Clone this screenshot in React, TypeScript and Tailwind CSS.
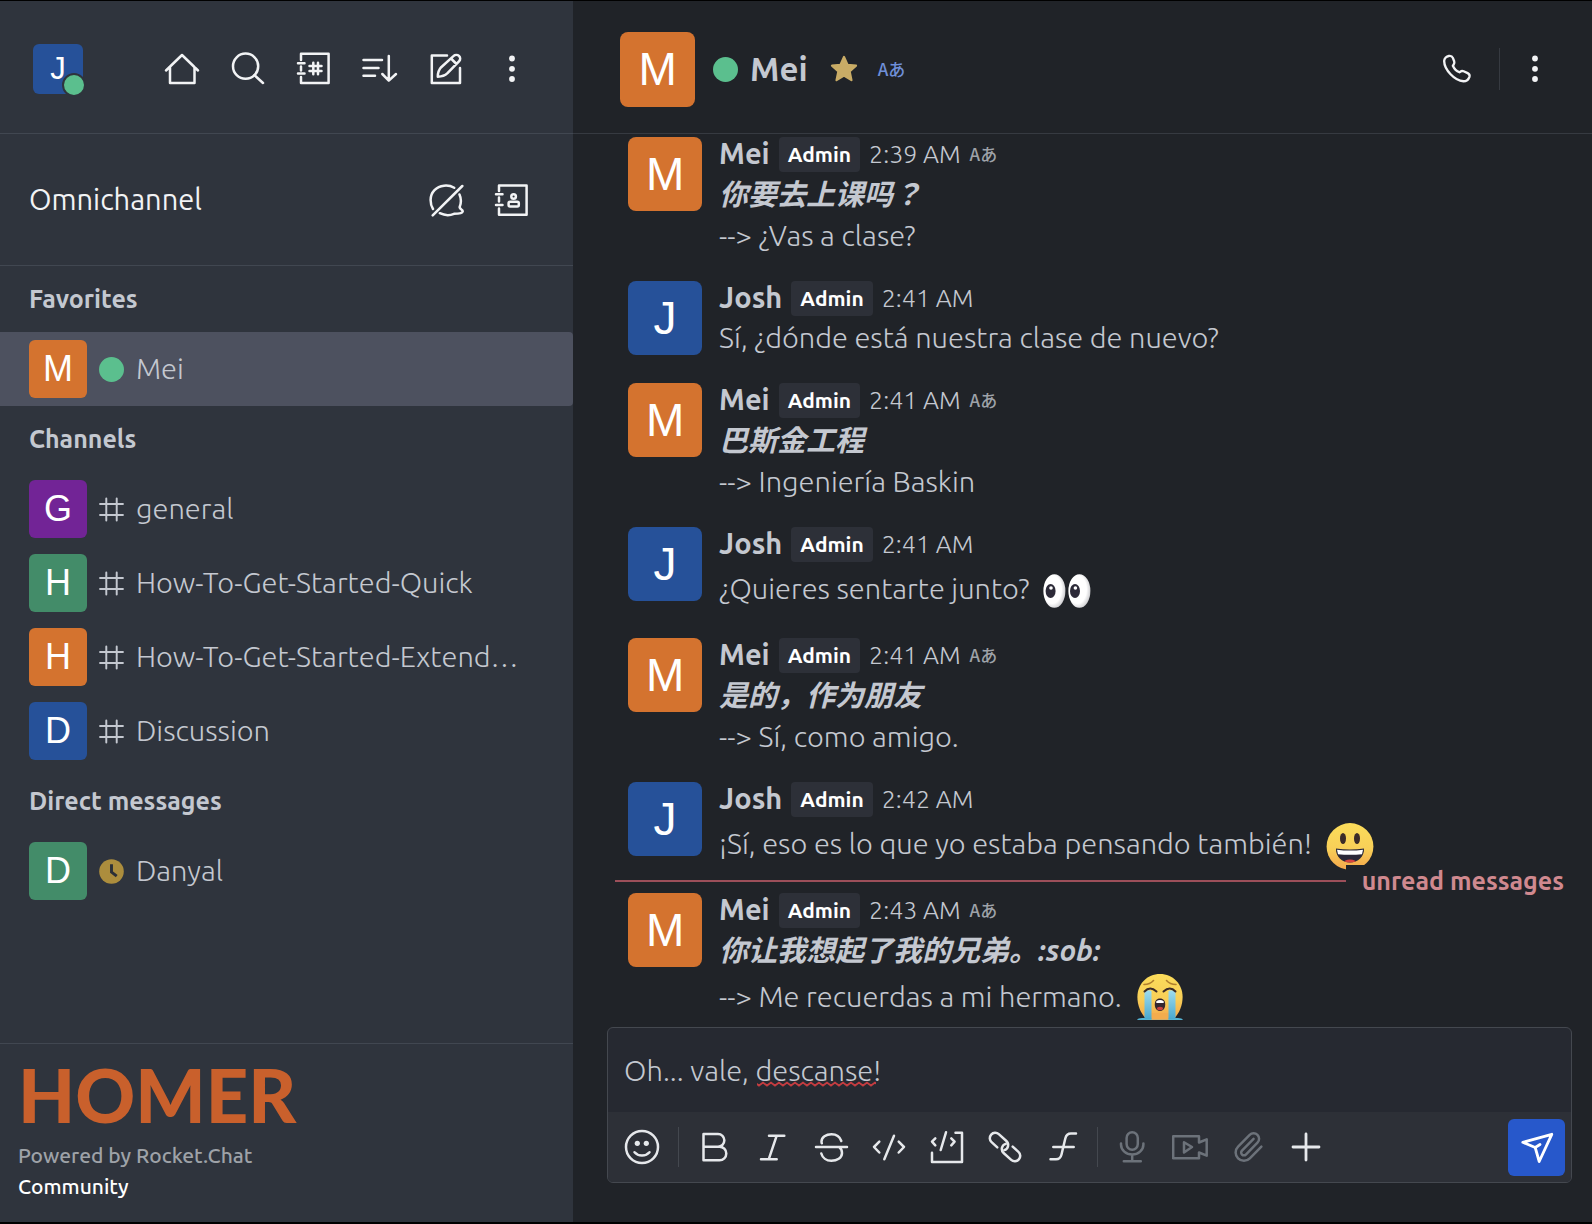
import React from "react";

type IconProps = { children: React.ReactNode; className?: string };

const Icon = ({ children, className = "size-9" }: IconProps) => (
  <svg
    viewBox="0 0 36 36"
    className={className}
    fill="none"
    stroke="currentColor"
    strokeWidth="2.5"
    strokeLinecap="round"
    strokeLinejoin="round"
    aria-hidden="true"
  >
    {children}
  </svg>
);

const Kebab = () => (
  <Icon>
    <g fill="currentColor" stroke="none">
      <circle cx="18" cy="7.5" r="2.9" />
      <circle cx="18" cy="17.8" r="2.9" />
      <circle cx="18" cy="28" r="2.9" />
    </g>
  </Icon>
);

const navIcons = [
  {
    label: "Home",
    icon: <Icon><path d="M2 19.5L18 4L34 19.5M6 16V32H30.5V16" /></Icon>,
  },
  {
    label: "Search",
    icon: <Icon><circle cx="15.6" cy="15.2" r="12.6" /><path d="M24.5 24.2L33 32" /></Icon>,
  },
  {
    label: "Directory",
    icon: (
      <Icon>
        <path d="M5 9V2.8H32.6V32H5V26M5 15.5V19.5M2 12.3H8.5M2 22.4H8.5" />
        <path d="M17.3 11.7V23.2M22 11.7V23.2M13.5 15H25.5M13.5 20H25.5" />
      </Icon>
    ),
  },
  {
    label: "Sort",
    icon: <Icon><path d="M1.5 9H20M1.5 17H16.5M1.5 24.7H13M26.8 5V29.5M20.3 23L26.8 29.6L34 23" /></Icon>,
  },
  {
    label: "Create new",
    icon: (
      <Icon>
        <path d="M19 4.6H3.8V32H32V17" />
        <path d="M9.8 25.7C9.8 21.8 11 18.6 13.2 16.2L25.7 4.9C27 3.6 29.5 3.5 31 4.9C32.5 6.3 32.5 8.7 31.2 10.1L19.5 22.2C17 24.6 13.8 25.7 9.8 25.7ZM23 7.5L28.5 13" />
      </Icon>
    ),
  },
  { label: "Options", icon: <Kebab /> },
];

const Hash = () => (
  <Icon className="size-[25px] shrink-0">
    <path strokeWidth="2.8" d="M10.5 2V34M25.5 2V34M1.5 10H34.5M1.5 26H34.5" />
  </Icon>
);

const Away = () => (
  <svg viewBox="0 0 24 24" className="size-[25px] shrink-0" role="img" aria-label="Away">
    <circle cx="12" cy="12" r="11.8" fill="#ac8d3d" />
    <path d="M12 5V12.5L17 16.5" fill="none" stroke="#2b2f37" strokeWidth="2.8" />
  </svg>
);

const Online = () => <span role="img" aria-label="Online" className="size-[25px] shrink-0 rounded-full bg-[#5bbf8e]" />;

const EyesEmoji = () => (
  <svg viewBox="0 0 48 48" className="mt-1 ml-[14px] size-12" role="img" aria-label="eyes">
    <defs>
      <radialGradient id="eye" cx="0.4" cy="0.45" r="0.6">
        <stop offset="0.7" stopColor="#ffffff" />
        <stop offset="1" stopColor="#cfcfd2" />
      </radialGradient>
    </defs>
    <ellipse cx="11.4" cy="24" rx="11" ry="16.8" fill="url(#eye)" />
    <ellipse cx="36.4" cy="24" rx="11" ry="16.8" fill="url(#eye)" />
    <ellipse cx="7.6" cy="24" rx="5" ry="7" fill="#2c2a38" />
    <ellipse cx="32" cy="24" rx="5" ry="7" fill="#2c2a38" />
    <circle cx="8" cy="21" r="1.8" fill="#fff" />
    <circle cx="32.4" cy="21" r="1.8" fill="#fff" />
  </svg>
);

const SmileyEmoji = () => (
  <svg viewBox="0 0 48 48" className="mt-1 ml-[14px] size-12" role="img" aria-label="smiley">
    <defs>
      <linearGradient id="face" x1="0" y1="0" x2="0" y2="1">
        <stop offset="0" stopColor="#fbdc5a" />
        <stop offset="0.55" stopColor="#f8cf58" />
        <stop offset="1" stopColor="#f3a64b" />
      </linearGradient>
      <clipPath id="grin">
        <path d="M10 26.5Q24 28.5 38 26.5C38.5 34.5 32 40.5 24 40.5C16 40.5 9.5 34.5 10 26.5Z" />
      </clipPath>
    </defs>
    <circle cx="24" cy="24.5" r="23.4" fill="url(#face)" />
    <ellipse cx="17" cy="16.5" rx="3" ry="5.6" fill="#3b2b28" />
    <ellipse cx="31" cy="16.5" rx="3" ry="5.6" fill="#3b2b28" />
    <g clipPath="url(#grin)">
      <rect x="8" y="25" width="32" height="18" fill="#2a2838" />
      <ellipse cx="24" cy="41" rx="6.5" ry="3.6" fill="#d8443f" />
      <path d="M11 27.7Q24 29.5 37 27.7L36 32.2Q24 33.5 12 32.2Z" fill="#fff" />
    </g>
  </svg>
);

const SobEmoji = () => (
  <svg viewBox="0 0 48 48" className="ml-[14px] size-12" role="img" aria-label="sob">
    <defs>
      <linearGradient id="tear" x1="0" y1="0" x2="0" y2="1">
        <stop offset="0" stopColor="#9fdcef" />
        <stop offset="1" stopColor="#4aa9cf" />
      </linearGradient>
    </defs>
    <path d="M24 1C37 1 46.6 11 46.6 24C46.6 33 43 41 37 46.5H11C5 41 1.4 33 1.4 24C1.4 11 11 1 24 1Z" fill="url(#face)" />
    <path d="M1 47Q2 44.5 8 45H40Q46 44.5 47 47Z" fill="#54b3d3" />
    <path d="M15.5 46.8V40H32.5V46.8Z" fill="#f3ac4d" />
    <path d="M8.5 18Q12 16.5 15.5 18V46H8.5ZM32.5 18Q36 16.5 39.5 18V46H32.5Z" fill="url(#tear)" />
    <g fill="none" strokeLinecap="round">
      <path d="M8 11.5Q14 11.5 17.5 7.5M40 11.5Q34 11.5 30.5 7.5" stroke="#b17f2c" strokeWidth="1.6" />
      <path d="M8.5 18.5Q14 12.5 20.5 18.5M27.5 18.5Q34 12.5 39.5 18.5" stroke="#3b2b28" strokeWidth="2" />
    </g>
    <path d="M24 25.5C27.5 25.5 29.2 28 29.2 31.5C29.2 35.5 27 38 24 38C21 38 18.8 35.5 18.8 31.5C18.8 28 20.5 25.5 24 25.5Z" fill="#33262f" />
    <path d="M20.3 28.3Q24 25.8 27.7 28.3V30H20.3Z" fill="#fff" />
    <ellipse cx="24" cy="35.5" rx="3" ry="1.8" fill="#c8423f" />
  </svg>
);

const rooms = [
  {
    title: "Favorites",
    items: [{ letter: "M", color: "bg-[#d4732f]", status: <Online />, name: "Mei", selected: true }],
  },
  {
    title: "Channels",
    items: [
      { letter: "G", color: "bg-[#722496]", status: <Hash />, name: "general" },
      { letter: "H", color: "bg-[#438c69]", status: <Hash />, name: "How-To-Get-Started-Quick" },
      { letter: "H", color: "bg-[#d4732f]", status: <Hash />, name: "How-To-Get-Started-Extend…" },
      { letter: "D", color: "bg-[#265199]", status: <Hash />, name: "Discussion" },
    ],
  },
  {
    title: "Direct messages",
    items: [{ letter: "D", color: "bg-[#438c69]", status: <Away />, name: "Danyal" }],
  },
];

type ChatMessage = {
  user: "Mei" | "Josh";
  time: string;
  original?: string;
  text: string;
  emoji?: React.ReactNode;
  unread?: boolean;
};

const messages: ChatMessage[] = [
  { user: "Mei", time: "2:39 AM", original: "你要去上课吗？", text: "--> ¿Vas a clase?" },
  { user: "Josh", time: "2:41 AM", text: "Sí, ¿dónde está nuestra clase de nuevo?" },
  { user: "Mei", time: "2:41 AM", original: "巴斯金工程", text: "--> Ingeniería Baskin" },
  { user: "Josh", time: "2:41 AM", text: "¿Quieres sentarte junto?", emoji: <EyesEmoji /> },
  { user: "Mei", time: "2:41 AM", original: "是的，作为朋友", text: "--> Sí, como amigo." },
  { user: "Josh", time: "2:42 AM", text: "¡Sí, eso es lo que yo estaba pensando también!", emoji: <SmileyEmoji /> },
  {
    user: "Mei",
    time: "2:43 AM",
    original: "你让我想起了我的兄弟。:sob:",
    text: "--> Me recuerdas a mi hermano.",
    emoji: <SobEmoji />,
    unread: true,
  },
];

const Translated = ({ className }: { className: string }) => (
  <span title="Auto-translated" className={`font-['Noto_Sans_CJK_JP',sans-serif] text-[17px] font-medium ${className}`}>
    Aあ
  </span>
);

const Message = ({ user, time, original, text, emoji, unread }: ChatMessage) => (
  <li className="relative flex gap-[17px] pb-6 pl-[55px] last:pb-0">
    {unread && (
      <div className="absolute inset-x-0 -top-7 flex h-8 items-center pl-[42px]">
        <span className="h-[2px] flex-1 bg-[#9c4f5a]" />
        <span className="bg-[#202328] pl-4 pr-7 text-[25px] leading-8 font-semibold text-[#d0898f]">unread messages</span>
      </div>
    )}
    <div
      className={`flex size-[74px] shrink-0 items-center justify-center rounded-lg font-['Liberation_Sans',Arial,sans-serif] text-[46px] text-white ${
        user === "Mei" ? "bg-[#d4732f]" : "bg-[#265199]"
      }`}
    >
      {user[0]}
    </div>
    <div className="min-w-0">
      <div className="flex h-9 items-start gap-[9px] leading-[34px]">
        <strong className="text-[29px] leading-[33px] font-semibold">{user}</strong>
        <span className="h-[35px] rounded bg-[#2d3038] px-[9px] text-[21px] font-semibold text-white">Admin</span>
        <time className="text-[25px] font-light">{time}</time>
        {original && <Translated className="text-[#9ea2a8]" />}
      </div>
      {original && (
        <p className="text-[29px] leading-[42px]">
          <em className="font-bold">{original}</em>
        </p>
      )}
      <p className={`flex items-center text-[29px] font-light ${emoji ? "h-[51px]" : "h-[42px]"}`}>
        {text}
        {emoji}
      </p>
    </div>
  </li>
);

const formatTools = [
  {
    label: "Bold",
    icon: <Icon><path d="M6.5 17.7H21A6.3 6.3 0 0 0 21 5H6.5V31.3H22.5A6.8 6.8 0 0 0 22.5 17.7H20" /></Icon>,
  },
  { label: "Italic", icon: <Icon><path d="M14 6.7H29.3M6 30.3H21.7M21.7 6.7L13.7 30.3" /></Icon> },
  {
    label: "Strike",
    icon: (
      <Icon>
        <path d="M3 18H34M28.3 12C26.8 7.5 23 5.2 18.5 5.2C13 5.2 8.5 8.2 8.5 12.5C8.5 13.3 8.6 13.8 8.8 14.3M8.3 24.5C9.5 29 13.5 31.8 18.3 31.8C24 31.8 29 29 29 24C29 21.5 28 19.5 26.3 18.3" />
      </Icon>
    ),
  },
  {
    label: "Inline code",
    icon: <Icon><path d="M8.3 12.7L3 18L8.3 23.5M27.7 12.7L33 18L27.7 23.5M23 6.7L13.3 30.3" /></Icon>,
  },
  {
    label: "Multi-line code",
    icon: (
      <Icon>
        <path d="M6.3 9.3L3 12.7L6.3 16.3M22.3 9.3L25.6 12.7L22.3 16.3M17 3.3L11.7 21M26.5 3.7H33V33H3V23.7" />
      </Icon>
    ),
  },
  {
    label: "Link",
    icon: (
      <Icon>
        <g transform="rotate(42 18 18)">
          <path d="M12.5 23.4H4.8A5.4 5.4 0 0 1 4.8 12.6H15A5.4 5.4 0 0 1 19.6 20.8" />
          <path d="M23.5 12.6H31.2A5.4 5.4 0 0 1 31.2 23.4H21A5.4 5.4 0 0 1 16.4 15.2" />
        </g>
      </Icon>
    ),
  },
  {
    label: "Formula",
    icon: (
      <Icon>
        <path d="M31 4.5H26C22.5 4.5 21 6.5 20.3 9.5L16.5 25.5C15.8 28.5 14 30.3 11 30.3H5.5M8.3 18H28.7" />
      </Icon>
    ),
  },
];

const attachTools = [
  {
    label: "Audio message",
    disabled: true,
    icon: (
      <Icon>
        <rect x="12.6" y="3.3" width="11.2" height="17.4" rx="5.6" />
        <path d="M7 14.5V15.5C7 21 12 25.6 18.2 25.6C24.4 25.6 29.4 21 29.4 15.5V14.5M18.2 25.6V32.3M9.8 32.3H26.8" />
      </Icon>
    ),
  },
  {
    label: "Video message",
    disabled: true,
    icon: (
      <Icon>
        <path d="M1.2 7.3H27V13.5L34.7 10.3V26.7L27 23.5V29.3H1.2Z" />
        <path d="M12 13.2L20 18L12 23.5Z" />
      </Icon>
    ),
  },
  {
    label: "Upload file",
    disabled: true,
    icon: (
      <Icon>
        <g transform="translate(1.5 1.5) scale(1.38)" strokeWidth="1.8">
          <path d="m16 6-8.414 8.586a2 2 0 0 0 2.829 2.829l8.414-8.586a4 4 0 1 0-5.657-5.657l-8.379 8.551a6 6 0 1 0 8.485 8.485l8.379-8.551" />
        </g>
      </Icon>
    ),
  },
  { label: "More", disabled: false, icon: <Icon><path strokeWidth="2.8" d="M18 5V31M5 18H31" /></Icon> },
];

const toolButton = "flex h-14 w-[58px] items-center justify-center disabled:text-[#6c727a]";

const Sidebar = () => (
  <aside className="flex w-[36%] shrink-0 flex-col bg-[#2f343d]">
    <div className="flex h-[133px] items-center justify-between border-b border-[#414751] pt-1 pr-7 pl-[33px] text-[#f2f3f5]">
      <div className="relative">
        <div className="flex size-[50px] items-center justify-center rounded-md bg-[#265199] font-['Liberation_Sans',Arial,sans-serif] text-[31px] text-white">
          J
        </div>
        <span className="absolute -right-[3px] -bottom-[3px] size-6 rounded-full border-2 border-[#2f343d] bg-[#5bbf8e]" />
      </div>
      <nav className="flex">
        {navIcons.map(({ label, icon }) => (
          <button key={label} aria-label={label} className="flex h-12 w-[66px] items-center justify-center">
            {icon}
          </button>
        ))}
      </nav>
    </div>

    <div className="flex h-[132px] items-center justify-between border-b border-[#414751] pr-7 pl-[29px] text-[#f2f3f5]">
      <h2 className="text-[29px]">Omnichannel</h2>
      <div className="flex">
        <button aria-label="Turn on answer chats" className="flex h-12 w-[66px] items-center justify-center">
          <Icon>
            <path d="M34.3 4L4.7 33.3M26.2 5.8C23 3.9 19.5 3.3 16 3.7C8.5 4.5 2.6 10 2.6 18C2.6 21.5 3.4 24.5 5 27M31.5 12.5C33.5 17 33.3 21 31.6 25.2C31.8 27.5 35.2 27.5 34.7 29.5C34.3 31.3 29 31.8 26 31.8C21 34 16 33.2 11.8 31.2" />
          </Icon>
        </button>
        <button aria-label="Contact center" className="flex h-12 w-[66px] items-center justify-center">
          <Icon>
            <path d="M5 9V3.5H32.6V32.7H5V26.5M5 15.5V19.5M2 12.3H8.5M2 22.9H8.5" />
            <circle cx="19.6" cy="14.5" r="2.3" />
            <rect x="14.6" y="19.8" width="10.2" height="4.8" rx="1.5" />
          </Icon>
        </button>
      </div>
    </div>

    <div className="flex-1 overflow-hidden">
      {rooms.map(({ title, items }) => (
        <section key={title}>
          <h3 className="px-[29px] text-[25px] leading-[66px] font-semibold">{title}</h3>
          {items.map(({ letter, color, status, name, selected }) => (
            <a
              key={name}
              href="#"
              className={`flex h-[74px] items-center rounded-r pl-[29px] text-[29px] font-light ${selected ? "bg-[#4d515f]" : ""}`}
            >
              <span
                className={`mr-3 flex size-[58px] shrink-0 items-center justify-center rounded-md font-['Liberation_Sans',Arial,sans-serif] text-4xl font-normal text-white ${color}`}
              >
                {letter}
              </span>
              {status}
              <span className="ml-3 truncate">{name}</span>
            </a>
          ))}
        </section>
      ))}
    </div>

    <footer className="border-t border-[#414751] pb-5 pl-[18px] text-[21px] leading-[31px] font-medium">
      <div className="h-24 font-['Lato',sans-serif] text-[74px] leading-[102px] font-black text-[#c9602c]">HOMER</div>
      <p className="text-[#9ea2a8]">Powered by Rocket.Chat</p>
      <p className="text-white">Community</p>
    </footer>
  </aside>
);

const Room = () => (
  <main className="flex min-w-0 flex-1 flex-col">
    <header className="flex h-[133px] shrink-0 items-center border-b border-[#363a41] pt-1 pr-6 pl-[47px]">
      <div className="flex size-[75px] items-center justify-center rounded-lg bg-[#d4732f] font-['Liberation_Sans',Arial,sans-serif] text-[46px] text-white">
        M
      </div>
      <span role="img" aria-label="Online" className="ml-[18px] size-[25px] rounded-full bg-[#5bbf8e]" />
      <h1 className="ml-3 text-[33px] font-semibold">Mei</h1>
      <button aria-label="Remove from favorites" className="ml-5 text-[#c9ac66]">
        <Icon className="size-8">
          <path
            fill="currentColor"
            d="M18 4.5L21.9 13.3L31.5 14.2L24.3 20.6L26.4 30.5L18 25.4L9.6 30.5L11.7 20.6L4.5 14.2L14.1 13.3Z"
          />
        </Icon>
      </button>
      <Translated className="ml-[18px] text-[#6f8fd8]" />
      <button aria-label="Call" className="ml-auto flex h-12 w-[84px] items-center justify-center text-[#f2f3f5]">
        <Icon className="size-[34px]">
          <path d="M9.3 4.2C7 4.6 4.5 6.8 4.4 9.5C4.6 19 15.5 30.2 24.8 31C28 31 30.3 28.8 31.2 26.3C31.6 24.6 30.8 23 29.3 22.3L25 20.4C23.8 19.9 22.6 20 21.6 20.8L20.6 21.4C18 20.5 14.8 17.3 13.6 14.6L14.6 13C15.3 12 15.4 11 15 9.8L13.6 6.2C12.9 4.6 11.2 3.9 9.3 4.2Z" />
        </Icon>
      </button>
      <span className="h-[42px] w-px bg-[#363a41]" />
      <button aria-label="Options" className="ml-[2px] flex h-12 w-[66px] items-center justify-center text-[#f2f3f5]">
        <Kebab />
      </button>
    </header>

    <ol className="min-h-0 flex-1 overflow-hidden pt-[3px]">
      {messages.map((message, i) => (
        <Message key={i} {...message} />
      ))}
    </ol>

    <form className="mr-5 mb-[39px] ml-[34px] shrink-0 overflow-hidden rounded-md border border-[#44484f] bg-[#262931]">
      <div className="relative flex">
        <input
          aria-label="Message"
          spellCheck={false}
          defaultValue="Oh... vale, descanse!"
          className="h-[84px] min-w-0 flex-1 bg-transparent px-4 text-[29px] font-light outline-none"
        />
        {/* spelling mark under "descanse" */}
        <svg className="absolute top-[53px] left-[149px] h-[6px] w-[119px]" aria-hidden="true">
          <defs>
            <pattern id="squiggle" width="8" height="6" patternUnits="userSpaceOnUse">
              <path d="M-2 1.5L2 4.5L6 1.5L10 4.5" fill="none" stroke="#c43c40" strokeWidth="1.8" />
            </pattern>
          </defs>
          <rect width="119" height="6" fill="url(#squiggle)" />
        </svg>
      </div>
      <div className="flex h-[70px] items-center bg-[#2d3037] pr-[6px] pl-[5px] text-[#e6e8eb]">
        <button type="button" aria-label="Emoji" className={toolButton}>
          <Icon>
            <circle cx="18" cy="18" r="16" />
            <path d="M10.5 23.3C14 27.5 22 27.5 25.5 23.3" />
            <circle cx="13.3" cy="14.3" r="2.6" fill="currentColor" stroke="none" />
            <circle cx="22.3" cy="14.3" r="2.6" fill="currentColor" stroke="none" />
          </Icon>
        </button>
        <span className="mx-[7px] h-10 w-px bg-[#44484f]" />
        {formatTools.map(({ label, icon }) => (
          <button key={label} type="button" aria-label={label} className={toolButton}>
            {icon}
          </button>
        ))}
        <span className="mx-[5px] h-10 w-px bg-[#44484f]" />
        {attachTools.map(({ label, icon, disabled }) => (
          <button key={label} type="button" aria-label={label} disabled={disabled} className={toolButton}>
            {icon}
          </button>
        ))}
        <button
          type="submit"
          aria-label="Send"
          className="ml-auto flex size-[57px] items-center justify-center rounded-md bg-[#2758cb] text-white"
        >
          <Icon>
            <path strokeWidth="2.8" d="M3.8 13.3L32.8 5.3L20.2 32.5L16.2 18.5ZM16.2 18.5L21 15.5" />
          </Icon>
        </button>
      </div>
    </form>
  </main>
);

export default function App() {
  return (
    <div className="flex h-screen border-t border-b-2 border-black bg-[#202328] font-['Ubuntu','Noto_Sans','Noto_Sans_CJK_JP',sans-serif] text-[#c4c8d0]">
      <Sidebar />
      <Room />
    </div>
  );
}
